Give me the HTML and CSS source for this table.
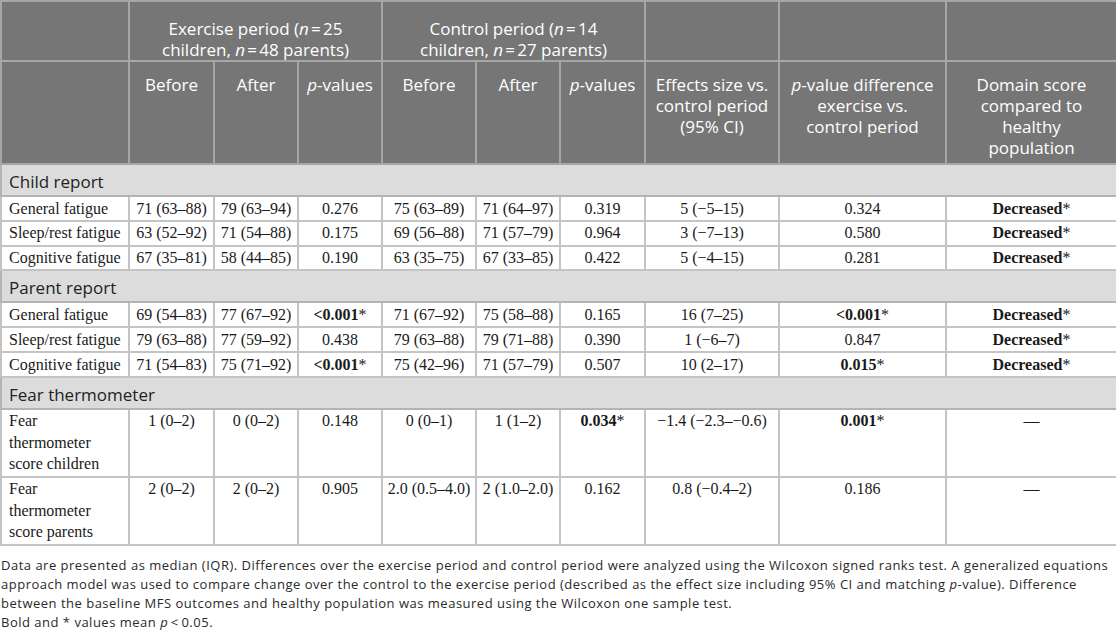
FILE: index.html
```html
<!DOCTYPE html>
<html lang="en">
<head>
<meta charset="utf-8">
<title>Table</title>
<link rel="stylesheet" href="styles.css">
</head>
<body>
<div class="wrap">
<table class="data">
  <colgroup>
    <col class="c-label"><col class="c-a"><col class="c-b"><col class="c-c"><col class="c-d"><col class="c-e"><col class="c-f"><col class="c-g"><col class="c-h"><col class="c-i">
  </colgroup>
  <thead>
    <tr class="h1">
      <th></th>
      <th colspan="3">Exercise period (<i>n</i>&#8239;=&#8239;25<br>children, <i>n</i>&#8239;=&#8239;48 parents)</th>
      <th colspan="3">Control period (<i>n</i>&#8239;=&#8239;14<br>children, <i>n</i>&#8239;=&#8239;27 parents)</th>
      <th></th>
      <th></th>
      <th></th>
    </tr>
    <tr class="h2">
      <th></th>
      <th>Before</th>
      <th>After</th>
      <th><i>p</i>-values</th>
      <th>Before</th>
      <th>After</th>
      <th><i>p</i>-values</th>
      <th>Effects size vs.<br>control period<br>(95% CI)</th>
      <th><i>p</i>-value difference<br>exercise vs.<br>control period</th>
      <th>Domain score<br>compared to<br>healthy<br>population</th>
    </tr>
  </thead>
  <tbody>
    <tr class="section"><td colspan="10">Child report</td></tr>
    <tr>
      <td class="lbl">General fatigue</td><td>71 (63–88)</td><td>79 (63–94)</td><td>0.276</td><td>75 (63–89)</td><td>71 (64–97)</td><td>0.319</td><td>5 (−5–15)</td><td>0.324</td><td><b>Decreased</b>*</td>
    </tr>
    <tr>
      <td class="lbl">Sleep/rest fatigue</td><td>63 (52–92)</td><td>71 (54–88)</td><td>0.175</td><td>69 (56–88)</td><td>71 (57–79)</td><td>0.964</td><td>3 (−7–13)</td><td>0.580</td><td><b>Decreased</b>*</td>
    </tr>
    <tr>
      <td class="lbl">Cognitive fatigue</td><td>67 (35–81)</td><td>58 (44–85)</td><td>0.190</td><td>63 (35–75)</td><td>67 (33–85)</td><td>0.422</td><td>5 (−4–15)</td><td>0.281</td><td><b>Decreased</b>*</td>
    </tr>
    <tr class="section"><td colspan="10">Parent report</td></tr>
    <tr>
      <td class="lbl">General fatigue</td><td>69 (54–83)</td><td>77 (67–92)</td><td><b>&lt;0.001</b>*</td><td>71 (67–92)</td><td>75 (58–88)</td><td>0.165</td><td>16 (7–25)</td><td><b>&lt;0.001</b>*</td><td><b>Decreased</b>*</td>
    </tr>
    <tr>
      <td class="lbl">Sleep/rest fatigue</td><td>79 (63–88)</td><td>77 (59–92)</td><td>0.438</td><td>79 (63–88)</td><td>79 (71–88)</td><td>0.390</td><td>1 (−6–7)</td><td>0.847</td><td><b>Decreased</b>*</td>
    </tr>
    <tr>
      <td class="lbl">Cognitive fatigue</td><td>71 (54–83)</td><td>75 (71–92)</td><td><b>&lt;0.001</b>*</td><td>75 (42–96)</td><td>71 (57–79)</td><td>0.507</td><td>10 (2–17)</td><td><b>0.015</b>*</td><td><b>Decreased</b>*</td>
    </tr>
    <tr class="section"><td colspan="10">Fear thermometer</td></tr>
    <tr>
      <td class="lbl">Fear<br>thermometer<br>score children</td><td>1 (0–2)</td><td>0 (0–2)</td><td>0.148</td><td>0 (0–1)</td><td>1 (1–2)</td><td><b>0.034</b>*</td><td>−1.4 (−2.3–−0.6)</td><td><b>0.001</b>*</td><td>—</td>
    </tr>
    <tr>
      <td class="lbl">Fear<br>thermometer<br>score parents</td><td>2 (0–2)</td><td>2 (0–2)</td><td>0.905</td><td>2.0 (0.5–4.0)</td><td>2 (1.0–2.0)</td><td>0.162</td><td>0.8 (−0.4–2)</td><td>0.186</td><td>—</td>
    </tr>
  </tbody>
</table>
<div class="notes">
  <p>Data are presented as median (IQR). Differences over the exercise period and control period were analyzed using the Wilcoxon signed ranks test. A generalized equations approach model was used to compare change over the control to the exercise period (described as the effect size including 95% CI and matching <i>p</i>-value). Difference between the baseline MFS outcomes and healthy population was measured using the Wilcoxon one sample test.</p>
  <p>Bold and * values mean <i>p</i>&#8201;&lt;&#8201;0.05.</p>
</div>
</div>
</body>
</html>
```

FILE: styles.css
```css
html, body {
  margin: 0;
  padding: 0;
  background: #ffffff;
}

.wrap {
  width: 1116px;
}

.data {
  width: 1116px;
  table-layout: fixed;
  border-collapse: collapse;
  border: 2px solid #b4b4b4;
}

.c-label { width: 128px; }
.c-a { width: 85px; }
.c-b { width: 84px; }
.c-c { width: 84px; }
.c-d { width: 94px; }
.c-e { width: 84px; }
.c-f { width: 85px; }
.c-g { width: 134px; }
.c-h { width: 167px; }
.c-i { width: 171px; }

.data th {
  background: #767676;
  color: #ffffff;
  font-family: "Open Sans", "Noto Sans", sans-serif;
  font-weight: 400;
  font-size: 17px;
  line-height: 21px;
  text-align: center;
  vertical-align: top;
  border: 2px solid #a6a6a6;
  padding: 0 2px;
  white-space: nowrap;
}

.data th i {
  font-style: italic;
}

.data .h1 th {
  height: 59px;
  padding-top: 16px;
  padding-bottom: 0;
  box-sizing: border-box;
}

.data .h2 th {
  padding-top: 12px;
  padding-bottom: 5px;
}

.data td {
  font-family: "Liberation Serif", "Times New Roman", serif;
  font-size: 16px;
  line-height: 21.6px;
  color: #1a1a1a;
  text-align: center;
  vertical-align: top;
  border: 2px solid #c4c4c4;
  padding: 0.6px 4px;
  background: #ffffff;
}

.data td.lbl {
  text-align: left;
  padding-left: 7px;
  padding-right: 2px;
}

.data tr.section td {
  background: #dcdcdc;
  font-family: "Open Sans", "Noto Sans", sans-serif;
  font-size: 17px;
  line-height: 22px;
  color: #222222;
  text-align: left;
  padding: 6px 7px 2px;
  border-color: #b4b4b4;
}

.notes {
  font-family: "Open Sans", "Noto Sans", sans-serif;
  font-size: 13px;
  letter-spacing: 0.5px;
  line-height: 19px;
  color: #2a2a2a;
  padding: 10px 0 0 1px;
}

.notes p {
  margin: 0;
}
```
